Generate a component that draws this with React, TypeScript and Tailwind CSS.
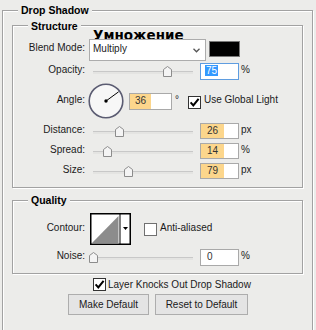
import React from "react";

function Legend({ title, top }: { title: string; top: string }) {
  return (
    <span
      className={`absolute left-[15px] ${top} bg-[#ECECEA] px-[3px] text-[10.5px] font-bold leading-[12px] text-black`}
    >
      {title}
    </span>
  );
}

function Checkbox({ checked, className }: { checked?: boolean; className?: string }) {
  return (
    <div
      className={`flex h-[13px] w-[13px] shrink-0 items-center justify-center border ${
        checked ? "border-[#333333]" : "border-[#707070]"
      } bg-white ${className ?? ""}`}
    >
      {checked && (
        <svg width="11" height="11" viewBox="0 0 11 11">
          <path d="M1.6 5.4 L4.3 8.4 L9.6 1.8" fill="none" stroke="#000" strokeWidth="2" />
        </svg>
      )}
    </div>
  );
}

function Thumb({ center }: { center: number }) {
  return (
    <svg
      width="9"
      height="11"
      viewBox="0 0 9 11"
      className="absolute top-[3px]"
      style={{ left: center - 4.5 }}
    >
      <path
        d="M0.5 3.5 L4.5 0.5 L8.5 3.5 L8.5 10.5 L0.5 10.5 Z"
        fill="#f4f4f4"
        stroke="#8c8c8c"
        strokeWidth="1"
      />
    </svg>
  );
}

function Track({ center }: { center: number }) {
  return (
    <div className="relative ml-[8px] h-full w-[100px] shrink-0">
      <div className="absolute left-0 right-0 top-[8px] h-[3px] border-t border-[#c8c8c8] bg-[#e4e4e2]" />
      <Thumb center={center} />
    </div>
  );
}

function NumBox({
  value,
  className,
  orangeW,
  focused,
  pl,
}: {
  value: string;
  className: string;
  orangeW?: string;
  focused?: boolean;
  pl: string;
}) {
  return (
    <div
      className={`relative shrink-0 border ${
        focused ? "border-[#5f9de0]" : "border-[#a9a9a9]"
      } bg-white ${className}`}
    >
      {orangeW && <div className={`absolute bottom-0 left-0 top-0 ${orangeW} bg-[#fcd68c]`} />}
      <div className={`relative ${pl} text-[10px] leading-[14px] text-[#333]`}>
        {focused ? <span className="bg-[#3399ff] px-[1px] text-white">{value}</span> : value}
      </div>
    </div>
  );
}

function SliderRow({
  label,
  center,
  value,
  unit,
  h,
  focused,
  plain,
  className,
}: {
  label: string;
  center: number;
  value: string;
  unit: string;
  h: string;
  focused?: boolean;
  plain?: boolean;
  className: string;
}) {
  return (
    <div className={`flex items-start ${h} ${className}`}>
      <div className="w-[72px] shrink-0 text-right leading-[14px]">{label}</div>
      <Track center={center} />
      <NumBox
        value={value}
        className={`ml-[7px] w-[39px] ${h}`}
        orangeW={focused || plain ? undefined : "w-[23px]"}
        focused={focused}
        pl={focused ? "pl-[4px]" : "pl-[6px]"}
      />
      <span className="ml-[2px] leading-[14px]">{unit}</span>
    </div>
  );
}

export default function App() {
  return (
    <div className="h-[330px] w-[316px] overflow-hidden bg-[#ECECEA] pt-[10px] font-['Liberation_Sans',Arial,sans-serif] text-[10px] text-[#1a1a1a]">
      <div className="relative ml-[2px] h-[340px] w-[311px] border border-[#a2a2a2] pl-[9px] pt-[14px] shadow-[inset_1px_1px_0_#fff,1px_1px_0_#fff]">
        <Legend title="Drop Shadow" top="top-[-7px]" />

        {/* Structure */}
        <div className="relative h-[163px] w-[291px] border border-[#a2a2a2] shadow-[inset_1px_1px_0_#fff,1px_1px_0_#fff]">
          <Legend title="Structure" top="top-[-6px]" />

          <div className="h-[13px] pl-[80px] font-['DejaVu_Sans',sans-serif] text-[13.5px] font-bold leading-[18px] text-black">
            Умножение
          </div>

          <div className="flex h-[22px] items-start">
            <div className="w-[72px] shrink-0 text-right leading-[18px]">Blend Mode:</div>
            <div className="ml-[4px] flex h-[22px] w-[117px] shrink-0 items-start justify-between border border-[#acacac] bg-white pl-[3px] pr-[5px]">
              <span className="leading-[18px] text-[#222]">Multiply</span>
              <svg width="7" height="5" viewBox="0 0 7 5" className="mt-[8px]">
                <path d="M0.5 0.8 L3.5 3.8 L6.5 0.8" fill="none" stroke="#555" strokeWidth="1.3" />
              </svg>
            </div>
            <div className="ml-[3px] mt-[2px] h-[16px] w-[31px] shrink-0 border border-[#777] bg-black" />
          </div>

          <SliderRow
            label="Opacity:"
            center={74.5}
            value="75"
            unit="%"
            h="h-[17px]"
            focused
            className="mt-[2px]"
          />

          <div className="mt-[3px] flex h-[36px] items-start">
            <div className="mt-[10px] w-[72px] shrink-0 text-right leading-[14px]">Angle:</div>
            <svg width="36" height="36" viewBox="0 0 36 36" className="ml-[3px] shrink-0">
              <circle cx="18" cy="18" r="16.8" fill="#f7f7f7" stroke="#5b5c72" strokeWidth="1.6" />
              <line x1="18" y1="18" x2="30.6" y2="8.8" stroke="#000" strokeWidth="1" />
              <circle cx="18" cy="18" r="1.7" fill="#000" />
            </svg>
            <NumBox value="36" className="ml-[5px] mt-[10px] h-[17px] w-[43px]" orangeW="w-[21px]" pl="pl-[5px]" />
            <span className="ml-[3px] mt-[10px] leading-[14px]">°</span>
            <Checkbox checked className="ml-[9px] mt-[13px] h-[12px] w-[12px]" />
            <span className="ml-[3px] mt-[10px] leading-[14px]">Use Global Light</span>
          </div>

          <SliderRow label="Distance:" center={26.5} value="26" unit="px" h="h-[16px]" className="mt-[4px]" />
          <SliderRow label="Spread:" center={14.5} value="14" unit="%" h="h-[16px]" className="mt-[4px]" />
          <SliderRow label="Size:" center={35.5} value="79" unit="px" h="h-[16px]" className="mt-[4px]" />
        </div>

        {/* Quality */}
        <div className="relative mt-[12px] h-[74px] w-[291px] border border-[#a2a2a2] shadow-[inset_1px_1px_0_#fff,1px_1px_0_#fff]">
          <Legend title="Quality" top="top-[-7px]" />

          <div className="mt-[12px] flex h-[32px] items-start">
            <div className="mt-[8px] w-[72px] shrink-0 text-right leading-[14px]">Contour:</div>
            <svg width="41" height="32" viewBox="0 0 41 32" className="ml-[5px] shrink-0">
              <rect x="0" y="0" width="41" height="32" fill="#fff" />
              <path d="M2 30 L28.5 3 L28.5 30 Z" fill="#8c8c8c" />
              <rect x="0.75" y="0.75" width="39.5" height="30.5" fill="none" stroke="#000" strokeWidth="1.5" />
              <line x1="30" y1="1" x2="30" y2="31" stroke="#000" strokeWidth="1" />
              <path d="M33 14 L38 14 L35.5 17 Z" fill="#000" />
            </svg>
            <Checkbox className="ml-[13px] mt-[10px]" />
            <span className="ml-[3px] mt-[8px] leading-[14px]">Anti-aliased</span>
          </div>

          <SliderRow label="Noise:" center={0.5} value="0" unit="%" h="h-[17px]" plain className="mt-[4px]" />
        </div>

        <div className="mt-[4px] flex h-[13px] items-start">
          <Checkbox checked className="ml-[81px]" />
          <span className="ml-[2px] leading-[14px]">Layer Knocks Out Drop Shadow</span>
        </div>

        <div className="mt-[3px] flex">
          <button className="ml-[56px] h-[21px] w-[81px] border border-[#adadad] bg-[#e4e4e4] text-[10px] leading-[12px] text-[#1a1a1a]">
            Make Default
          </button>
          <button className="ml-[6px] h-[21px] w-[93px] border border-[#adadad] bg-[#e4e4e4] text-[10px] leading-[12px] text-[#1a1a1a]">
            Reset to Default
          </button>
        </div>
      </div>
    </div>
  );
}
